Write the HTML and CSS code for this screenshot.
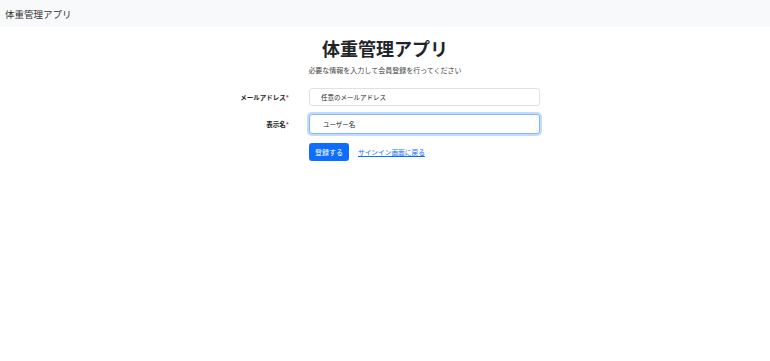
FILE: index.html
```html
<!DOCTYPE html>
<html lang="ja">
<head>
    <meta charset="UTF-8">
    <meta name="viewport" content="width=device-width, initial-scale=1.0">
    <title>体重管理アプリ</title>
    <link rel="stylesheet" href="styles.css">
</head>
<body>
    <nav class="navbar">
        <span class="brand">体重管理アプリ</span>
    </nav>

    <main class="container">
        <h1>体重管理アプリ</h1>
        <p class="lead">必要な情報を入力して会員登録を行ってください</p>

        <form class="signup">
            <label class="label" for="email">メールアドレス<span class="req">*</span></label>
            <input type="text" id="email" class="field" value="任意のメールアドレス">

            <label class="label" for="name">表示名<span class="req">*</span></label>
            <input type="text" id="name" class="field focused" value="ユーザー名">

            <div></div>
            <div class="actions">
                <button type="button" class="btn">登録する</button>
                <a href="#" class="back">サインイン画面に戻る</a>
            </div>
        </form>
    </main>
</body>
</html>
```

FILE: styles.css
```css
body {
    font-family: "Noto Sans CJK JP", "Noto Sans", sans-serif;
    background-color: #ffffff;
    color: #212529;
    margin: 0;
}

.navbar {
    background-color: #f8f9fa;
    height: 27px;
    display: flex;
    align-items: center;
    padding: 0 5px;
}

.brand {
    font-size: 9.5px;
    color: #333;
}

.container {
    display: flex;
    flex-direction: column;
    align-items: center;
}

h1 {
    font-size: 18px;
    font-weight: bold;
    margin: 9px 0 0;
    line-height: 24px;
}

.lead {
    font-size: 7px;
    color: #444;
    margin: 4px 0 0;
    line-height: 12px;
}

.signup {
    width: 310px;
    margin-top: 12px;
    display: grid;
    grid-template-columns: 59px 231px;
    column-gap: 20px;
    row-gap: 8px;
    align-items: center;
}

.label {
    font-size: 6.5px;
    font-weight: bold;
    text-align: right;
}

.req {
    color: #dc3545;
}

.field {
    box-sizing: border-box;
    height: 18px;
    padding: 0 11px;
    border: 1px solid #dee2e6;
    border-radius: 3px;
    font-family: inherit;
    font-size: 6.5px;
    color: #212529;
    outline: none;
}

.field.focused {
    height: 20px;
    padding-left: 13px;
    border-color: #86b7fe;
    box-shadow: 0 0 0 2px #c2dbfe;
}

.actions {
    display: flex;
    align-items: center;
    gap: 9px;
    margin-top: 1px;
}

.btn {
    height: 18px;
    padding: 0 6px;
    background-color: #0d6efd;
    border: none;
    border-radius: 3px;
    color: #ffffff;
    font-family: inherit;
    font-size: 7px;
}

.back {
    font-size: 6.7px;
    color: #0d6efd;
}
```
